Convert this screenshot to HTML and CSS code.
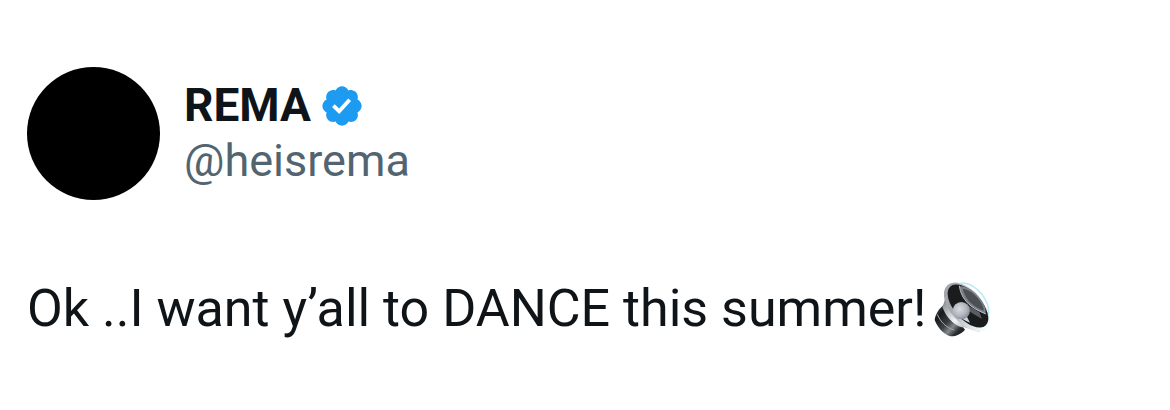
FILE: index.html
```html
<!DOCTYPE html>
<html lang="en">
<head>
  <meta charset="UTF-8">
  <title>REMA (@heisrema)</title>
  <link rel="stylesheet" href="styles.css">
</head>
<body>
  <article class="post">
    <header class="author">
      <div class="avatar"></div>
      <div class="author-info">
        <div class="name-row">
          <span class="name">REMA</span>
          <svg class="badge" viewBox="0 0 22 22" role="img" aria-label="Verified">
            <path fill="#1d9bf0" d="M20.396 11c-.018-.646-.215-1.275-.57-1.816-.354-.54-.852-.972-1.438-1.246.223-.607.27-1.264.14-1.897-.131-.634-.437-1.218-.882-1.687-.47-.445-1.053-.75-1.687-.882-.633-.13-1.29-.083-1.897.14-.273-.587-.704-1.086-1.245-1.44S11.647 1.62 11 1.604c-.646.017-1.273.213-1.813.568s-.969.854-1.24 1.44c-.608-.223-1.267-.272-1.902-.14-.635.13-1.22.436-1.69.882-.445.47-.749 1.055-.878 1.688-.13.633-.08 1.29.144 1.896-.587.274-1.087.705-1.443 1.245-.356.54-.555 1.17-.574 1.817.02.647.218 1.276.574 1.817.356.54.856.972 1.443 1.245-.224.606-.274 1.263-.144 1.896.13.634.433 1.218.877 1.688.47.443 1.054.747 1.687.878.633.132 1.29.084 1.897-.136.274.586.705 1.084 1.246 1.439.54.354 1.17.551 1.816.569.647-.016 1.276-.213 1.817-.567s.972-.854 1.245-1.44c.604.239 1.266.296 1.903.164.636-.132 1.22-.447 1.68-.907.46-.46.776-1.044.908-1.681s.075-1.299-.165-1.903c.586-.274 1.084-.705 1.439-1.246.354-.54.551-1.17.569-1.816zM9.662 14.85l-3.429-3.428 1.293-1.302 2.072 2.072 4.4-4.794 1.347 1.246z"/>
          </svg>
        </div>
        <span class="handle">@heisrema</span>
      </div>
    </header>
    <div class="message">
      <p class="text">Ok ..I want y’all to DANCE this summer!</p>
      <svg class="speaker" viewBox="40 34 171 171" role="img" aria-label="Speaker">
        <defs>
          <linearGradient id="magnet" x1="0" y1="0" x2="1" y2="1">
            <stop offset="0" stop-color="#55595d"/>
            <stop offset=".25" stop-color="#17191b"/>
            <stop offset=".5" stop-color="#3b4044"/>
            <stop offset=".65" stop-color="#85898d"/>
            <stop offset=".8" stop-color="#2a2d30"/>
            <stop offset="1" stop-color="#111"/>
          </linearGradient>
          <linearGradient id="shell" x1="0" y1="0" x2="1" y2="1">
            <stop offset="0" stop-color="#777b80"/>
            <stop offset=".5" stop-color="#f4f5f6"/>
            <stop offset="1" stop-color="#74787d"/>
          </linearGradient>
          <linearGradient id="rim" gradientUnits="userSpaceOnUse" x1="100" y1="145" x2="178" y2="78">
            <stop offset="0" stop-color="#a2a6ab"/>
            <stop offset=".5" stop-color="#d3d6d9"/>
            <stop offset="1" stop-color="#f3fafc"/>
          </linearGradient>
          <radialGradient id="dome" cx=".4" cy=".4" r=".65">
            <stop offset="0" stop-color="#d9dde2"/>
            <stop offset=".6" stop-color="#b2b7bf"/>
            <stop offset="1" stop-color="#858a92"/>
          </radialGradient>
        </defs>
        <path fill="url(#magnet)" d="M72 104C56 114 43 136 42 151c9 22 24 42 47 49 17 1 33-8 44-20z"/>
        <path fill="none" stroke="#a5a9ad" stroke-width="3" d="M50 134c9 22 27 41 51 47"/>
        <path fill="url(#shell)" d="M73 88c-2 9-5 17-8 24 10 26 29 52 58 61 14-1 30 8 54 13z"/>
        <ellipse cx="139" cy="112" rx="88" ry="49" transform="rotate(48 139 112)" fill="url(#rim)"/>
        <ellipse cx="142" cy="109" rx="79" ry="41" transform="rotate(48 142 109)" fill="#191b1d"/>
        <!-- light falling across the cone -->
        <path fill="#d0d3d6" d="M108 132l22-8 18 35c-14-5-29-15-40-27z"/>
        <path fill="#585d62" d="M136 104l40 24 8 20-40-24z"/>
        <circle cx="122" cy="123" r="26" fill="url(#dome)"/>
        <!-- far side of the rim -->
        <path fill="#7c8187" d="M116 50c24-3 53 20 68 45 10 16 13 28 10 38-16-6-28-11-43-23-20-16-31-37-35-60z"/>
        <path fill="#4b5055" d="M126 57c20 2 43 21 54 40 7 12 10 20 9 26-13-4-24-10-34-19-15-13-25-29-29-47z"/>
        <path fill="none" stroke="#b9bdc1" stroke-width="3" d="M116 48c3 26 16 46 35 61 14 11 28 16 45 24"/>
        <path fill="none" stroke="#b8e9f2" stroke-width="4" d="M116 41c26-6 60 15 79 51 8 15 11 31 8 45"/>
      </svg>
    </div>
  </article>
</body>
</html>
```
FILE: styles.css
```css
body {
  margin: 0;
  background: #fff;
  color: #0f1419;
  font-family: Roboto, "Liberation Sans", sans-serif;
}

.post {
  padding: 67px 27px;
}

.author {
  display: flex;
  gap: 24px;
}

.avatar {
  width: 133px;
  height: 133px;
  flex-shrink: 0;
  border-radius: 50%;
  background: #000;
}

.author-info {
  padding-top: 11px;
}

.name-row {
  display: flex;
  align-items: center;
  gap: 8px;
}

.name {
  font-size: 46px;
  font-weight: 700;
  line-height: 55px;
}

.badge {
  width: 46px;
  height: 46px;
}

.handle {
  color: #536471;
  font-size: 45px;
  line-height: 55px;
}

.message {
  display: flex;
  align-items: center;
  gap: 8px;
  margin-top: 79px;
}

.text {
  margin: 0;
  font-size: 52px;
  line-height: 60px;
}

.speaker {
  width: 57px;
  height: 57px;
  flex-shrink: 0;
}
```
